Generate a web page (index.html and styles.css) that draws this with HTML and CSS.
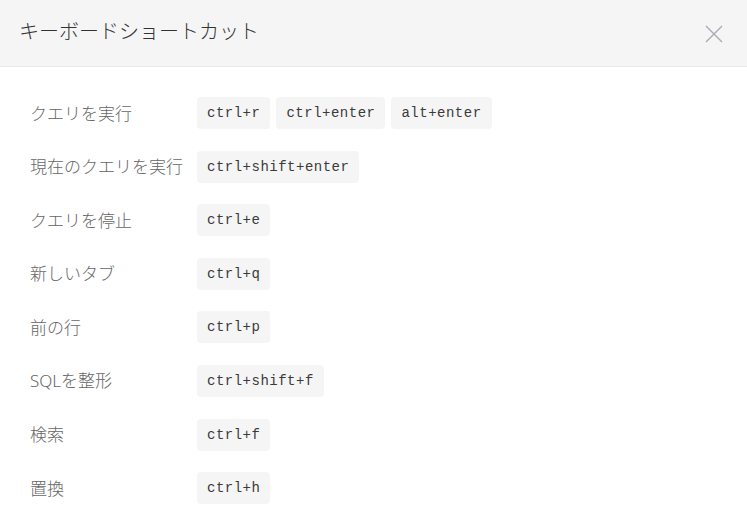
FILE: index.html
```html
<!DOCTYPE html>
<html lang="ja">
<head>
<meta charset="utf-8">
<title>キーボードショートカット</title>
<link rel="stylesheet" href="styles.css">
</head>
<body>
<div class="dialog">
  <header class="header">
    <h1 class="title">キーボードショートカット</h1>
    <button class="close" aria-label="close">
      <svg width="18" height="18" viewBox="0 0 18 18"><path d="M1 1 L17 17 M17 1 L1 17" stroke="#a9abb3" stroke-width="1.4" fill="none"/></svg>
    </button>
  </header>
  <div class="body">
    <div class="row"><span class="label">クエリを実行</span><div class="keys"><kbd>ctrl+r</kbd><kbd>ctrl+enter</kbd><kbd>alt+enter</kbd></div></div>
    <div class="row"><span class="label">現在のクエリを実行</span><div class="keys"><kbd>ctrl+shift+enter</kbd></div></div>
    <div class="row"><span class="label">クエリを停止</span><div class="keys"><kbd>ctrl+e</kbd></div></div>
    <div class="row"><span class="label">新しいタブ</span><div class="keys"><kbd>ctrl+q</kbd></div></div>
    <div class="row"><span class="label">前の行</span><div class="keys"><kbd>ctrl+p</kbd></div></div>
    <div class="row"><span class="label">SQLを整形</span><div class="keys"><kbd>ctrl+shift+f</kbd></div></div>
    <div class="row"><span class="label">検索</span><div class="keys"><kbd>ctrl+f</kbd></div></div>
    <div class="row"><span class="label">置換</span><div class="keys"><kbd>ctrl+h</kbd></div></div>
  </div>
</div>
</body>
</html>
```
FILE: styles.css
```css
* { box-sizing: border-box; }
html, body { margin: 0; padding: 0; background: #fff; }
body { font-family: "Noto Sans", "Noto Sans CJK JP", sans-serif; }
.dialog { width: 747px; height: 532px; overflow: hidden; }
.header {
  height: 67px;
  background: #f5f5f5;
  border-bottom: 1px solid #e8e8e8;
  display: flex;
  align-items: center;
  justify-content: space-between;
  padding: 0 24px 0 19px;
}
.title {
  margin: 0;
  font-size: 20px;
  font-weight: 300;
  color: #333;
  font-family: "Noto Sans CJK JP", sans-serif;
  position: relative;
  top: -3px;
}
.close {
  border: 0;
  background: none;
  padding: 0;
  width: 18px;
  height: 18px;
  display: flex;
  position: relative;
  top: 1px;
}
.body {
  padding: 30px 0 0 30px;
  display: flex;
  flex-direction: column;
  gap: 21.6px;
}
.row {
  display: flex;
  align-items: center;
  height: 32px;
}
.label {
  width: 167px;
  font-size: 17px;
  font-weight: 300;
  color: #666;
  white-space: nowrap;
  position: relative;
  top: -1px;
}
.keys { display: flex; gap: 6px; }
kbd {
  display: inline-flex;
  align-items: center;
  height: 32px;
  padding: 0 10px;
  background: #f5f5f5;
  border-radius: 4px;
  font-family: "Liberation Mono", "DejaVu Sans Mono", monospace;
  font-size: 14px;
  letter-spacing: 0.5px;
  color: #3a3a3a;
}
```
